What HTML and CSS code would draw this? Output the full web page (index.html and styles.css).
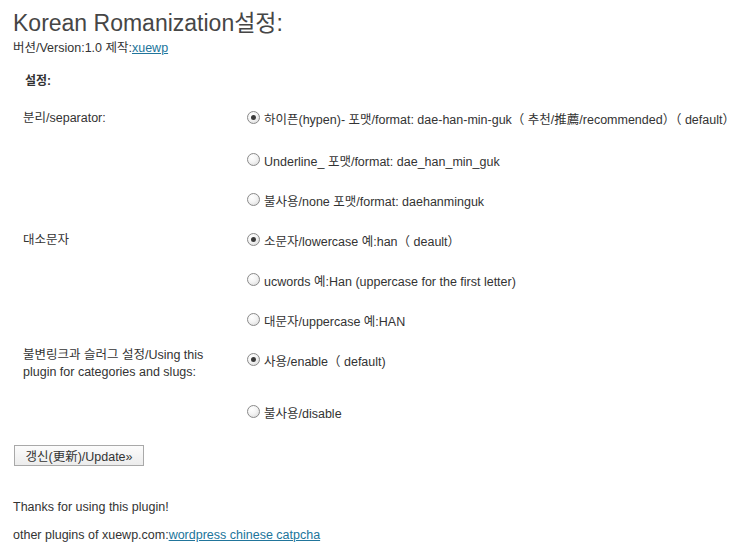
FILE: index.html
```html
<!DOCTYPE html>
<html lang="ko">
<head>
<meta charset="utf-8">
<title>Korean Romanization설정</title>
<link rel="stylesheet" href="styles.css">
</head>
<body>
<div class="wrap">
  <h2 class="title">Korean Romanization설정:</h2>
  <p class="version">버션/Version:1.0 제작:<a href="#">xuewp</a></p>
  <h3 class="section">설정:</h3>
  <div class="form">
    <div class="group">
      <div class="label">분리/separator:</div>
      <div class="options">
        <label class="opt first"><span class="radio checked"></span>하이픈(hypen)- 포맷/format: dae-han-min-guk（ 추천/推薦/recommended）（ default）</label>
        <label class="opt"><span class="radio"></span>Underline_ 포맷/format: dae_han_min_guk</label>
        <label class="opt"><span class="radio"></span>불사용/none 포맷/format: daehanminguk</label>
      </div>
    </div>
    <div class="group">
      <div class="label">대소문자</div>
      <div class="options">
        <label class="opt"><span class="radio checked"></span>소문자/lowercase 예:han（ deault）</label>
        <label class="opt"><span class="radio"></span>ucwords 예:Han (uppercase for the first letter)</label>
        <label class="opt"><span class="radio"></span>대문자/uppercase 예:HAN</label>
      </div>
    </div>
    <div class="group">
      <div class="label two">불변링크과 슬러그 설정/Using this plugin for categories and slugs:</div>
      <div class="options">
        <label class="opt spaced"><span class="radio checked"></span>사용/enable（ default)</label>
        <label class="opt"><span class="radio"></span>불사용/disable</label>
      </div>
    </div>
  </div>
  <button class="update" type="button">갱신(更新)/Update»</button>
  <p class="thanks">Thanks for using this plugin!</p>
  <p class="other">other plugins of xuewp.com:<a href="#">wordpress chinese catpcha</a></p>
</div>
</body>
</html>
```
FILE: styles.css
```css
html, body {
  margin: 0;
  padding: 0;
  background: #fff;
}
body {
  font-family: "Liberation Sans", Arial, "Noto Sans CJK KR", sans-serif;
  font-size: 12.5px;
  color: #333;
}
.wrap {
  padding-left: 13px;
  width: 724px;
}
.title {
  margin: 8px 0 0 0;
  font-size: 23px;
  line-height: 30px;
  font-weight: normal;
  color: #464646;
}
.version {
  margin: 1px 0 0 0;
  line-height: 18px;
  color: #333;
}
a {
  color: #21759b;
  text-decoration: underline;
}
.section {
  margin: 15px 0 0 12px;
  font-size: 12px;
  line-height: 18px;
  font-weight: bold;
  color: #333;
}
.form {
  margin-top: 8px;
  padding-left: 10px;
}
.group {
  display: grid;
  grid-template-columns: 224px 1fr;
}
.label {
  line-height: 40px;
  color: #333;
}
.label.two {
  line-height: 17px;
  padding-top: 7px;
  width: 200px;
}
.options {
  display: flex;
  flex-direction: column;
}
.opt {
  height: 40px;
  display: flex;
  align-items: center;
  gap: 4px;
  white-space: nowrap;
  color: #333;
}
.opt.first {
  margin-bottom: 2px;
}
.opt.spaced {
  margin-bottom: 12px;
}
.radio {
  width: 11px;
  height: 11px;
  border-radius: 50%;
  border: 1px solid #8a8a8a;
  background: radial-gradient(circle at 35% 30%, #fff 0%, #f4f4f4 45%, #d6d6d6 100%);
  position: relative;
  flex: none;
  margin-top: -2px;
}
.radio.checked::after {
  content: "";
  position: absolute;
  left: 3px;
  top: 3px;
  width: 5px;
  height: 5px;
  border-radius: 50%;
  background: #3a3a3a;
}
.update {
  display: block;
  margin: 13px 0 0 1px;
  width: 130px;
  height: 21px;
  padding: 0;
  border: 1px solid #a9a9a9;
  background: linear-gradient(#fcfcfc, #ececec);
  font-family: "Liberation Sans", Arial, "Noto Sans CJK KR", sans-serif;
  font-size: 12.5px;
  color: #333;
  text-align: center;
}
.thanks {
  margin: 32px 0 0 0;
  line-height: 18px;
}
.other {
  margin: 10px 0 0 0;
  line-height: 18px;
}
```
